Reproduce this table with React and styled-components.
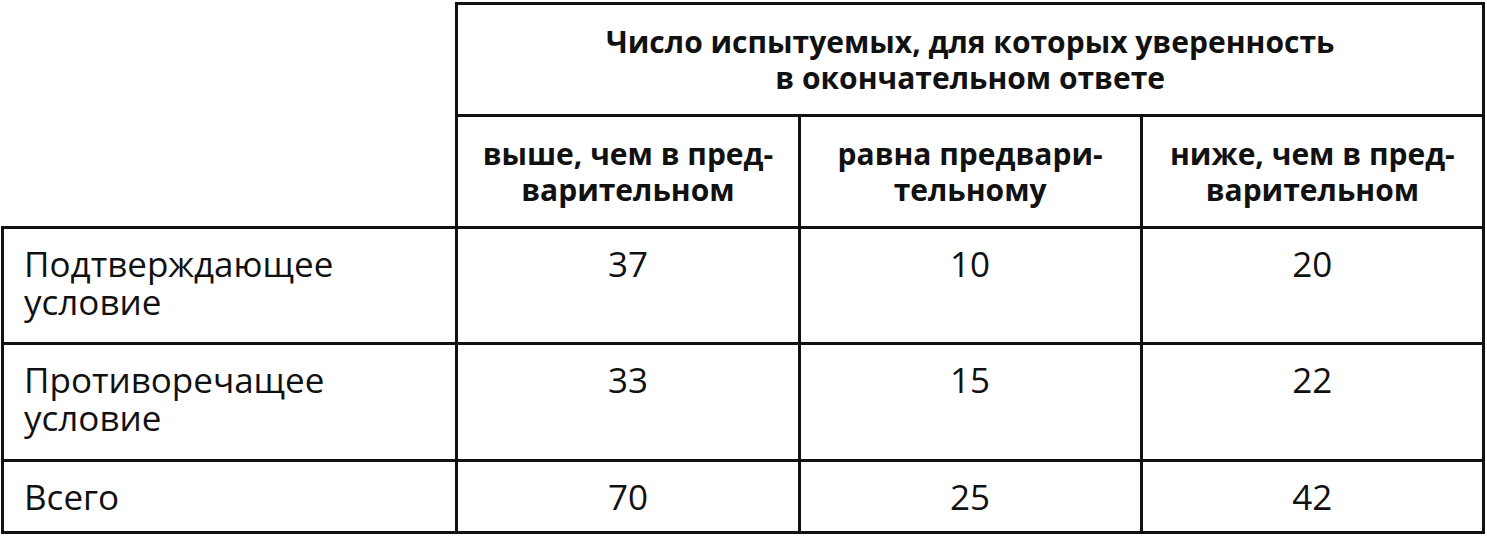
import React from "react";
import styled, { createGlobalStyle } from "styled-components";

const GlobalStyle = createGlobalStyle`
  html, body {
    margin: 0;
    padding: 0;
    background: #fff;
  }
  body {
    font-family: "Open Sans", "Noto Sans", sans-serif;
    color: #111;
  }
`;

const Page = styled.div`
  padding: 2px 3px 0 1px;
`;

const Table = styled.table`
  width: 1484px;
  border-collapse: collapse;
  table-layout: fixed;
`;

const Cell = styled.td`
  border: 3px solid #111;
  padding: 16px 20px 0;
  vertical-align: top;
  font-size: 35px;
  line-height: 38px;
  text-align: ${(p) => (p.$label ? "left" : "center")};
  height: ${(p) => p.$h}px;
  box-sizing: border-box;
`;

const Blank = styled.td`
  border: none;
`;

const HeadCell = styled.th`
  border: 3px solid #111;
  padding: 0 10px;
  font-size: 30px;
  font-weight: 700;
  line-height: 36px;
  text-align: center;
  vertical-align: middle;
  height: 112px;
  box-sizing: border-box;
`;

const rows = [
  { label: ["Подтверждающее", "условие"], values: [37, 10, 20], h: 116 },
  { label: ["Противоречащее", "условие"], values: [33, 15, 22], h: 117 },
  { label: ["Всего"], values: [70, 25, 42], h: 72 },
];

export default function App() {
  return (
    <Page>
      <GlobalStyle />
      <Table>
        <colgroup>
          <col style={{ width: 454 }} />
          <col style={{ width: 342 }} />
          <col style={{ width: 342 }} />
          <col style={{ width: 342 }} />
        </colgroup>
        <thead>
          <tr>
            <Blank rowSpan={2} />
            <HeadCell colSpan={3}>
              Число испытуемых, для которых уверенность
              <br />в окончательном ответе
            </HeadCell>
          </tr>
          <tr>
            <HeadCell>
              выше, чем в пред-
              <br />
              варительном
            </HeadCell>
            <HeadCell>
              равна предвари-
              <br />
              тельному
            </HeadCell>
            <HeadCell>
              ниже, чем в пред-
              <br />
              варительном
            </HeadCell>
          </tr>
        </thead>
        <tbody>
          {rows.map((r) => (
            <tr key={r.label[0]}>
              <Cell $label $h={r.h}>
                {r.label.map((l, i) => (
                  <React.Fragment key={l}>
                    {i > 0 && <br />}
                    {l}
                  </React.Fragment>
                ))}
              </Cell>
              {r.values.map((v, i) => (
                <Cell key={i} $h={r.h}>
                  {v}
                </Cell>
              ))}
            </tr>
          ))}
        </tbody>
      </Table>
    </Page>
  );
}
